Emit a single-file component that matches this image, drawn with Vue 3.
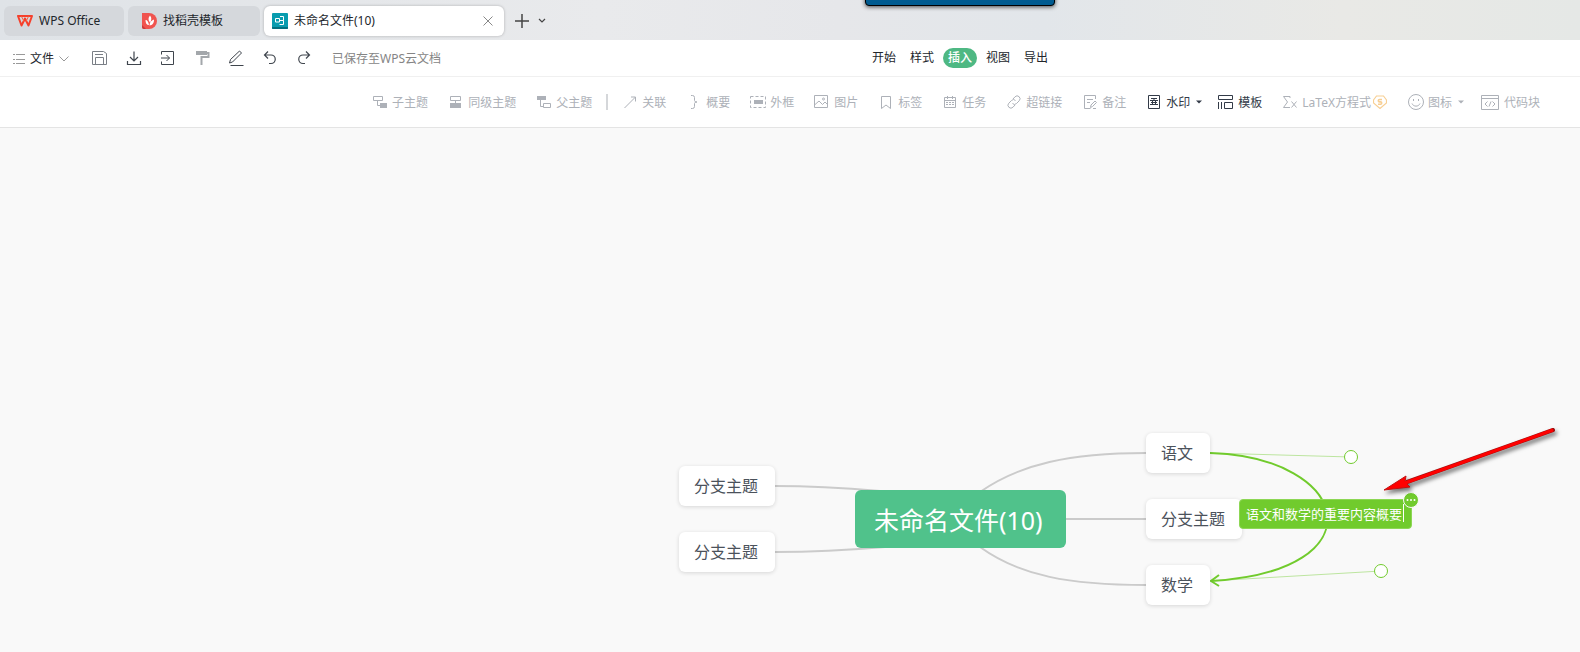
<template>
  <div class="app">
    <header class="tabbar">
      <a class="tab tab-home" href="#">
        <svg width="16" height="12" viewBox="0 0 16 12">
          <path d="M1 1h14l-3.500 9.500-3.500-7-3.500 7z" fill="none" stroke="#f5402c" stroke-width="2" stroke-linejoin="round" />
          <path d="M4.500 1.500l2.500 5M11.500 1.500l-2.500 5" stroke="#fb6340" stroke-width="1" />
        </svg>
        WPS Office
      </a>
      <a class="tab tab-docer" href="#">
        <svg width="15" height="16" viewBox="0 0 15 16">
          <path d="M0 0h7a8 8 0 0 1 0 16H2a2 2 0 0 1-2-2z" fill="#f0544f" />
          <path d="M0 12l4 4H2a2 2 0 0 1-2-2z" fill="#c93a3a" />
          <path d="M8 2.500c2 2 1.500 5 0 7-2-2-2-5 0-7zM3.500 7c2 0 3 2 3.500 5C4.500 12 3.500 10 3.500 7zM12 6.500c0 4-1.500 5.500-4.500 6C7.500 9.500 9 7.500 12 6.500z" fill="#fff" />
        </svg>
        找稻壳模板
      </a>
      <div class="tab tab-active">
        <svg width="16" height="16" viewBox="0 0 16 16">
          <rect width="16" height="16" rx="1" fill="#089caf" />
          <path d="M0 14h16v1a1 1 0 0 1-1 1H1a1 1 0 0 1-1-1z" fill="#04707f" />
          <path d="M3.500 5.500h4v3.500h-4zM7.500 7.500h4M8 3.500h3.500v4M7.500 11.500h4v-4" fill="none" stroke="#fff" />
        </svg>
        <span class="tab-name">未命名文件(10)</span>
        <button class="plain" aria-label="关闭">
          <svg width="10" height="10" viewBox="0 0 10 10"><path d="M.5.5l9 9M9.500.5l-9 9" stroke="#888" /></svg>
        </button>
      </div>
      <button class="plain add" aria-label="新建">
        <svg width="14" height="14" viewBox="0 0 14 14"><path d="M7 0v14M0 7h14" stroke="#444" stroke-width="1.500" /></svg>
      </button>
      <button class="plain more" aria-label="更多">
        <svg width="8" height="6" viewBox="0 0 8 6"><path d="M1 1l3 3 3-3" fill="none" stroke="#444" stroke-width="1.200" /></svg>
      </button>
      <div class="dock"></div>
    </header>

    <nav class="menubar">
      <div class="menu-left">
        <button class="plain file">
          <svg width="13" height="12" viewBox="0 0 13 12"><path d="M1 1.500h2M4 1.500h9M1 6.500h2M4 6.500h9M1 10.500h2M4 10.500h9" stroke="#999" /></svg>
          <span>文件</span>
          <svg width="10" height="6" viewBox="0 0 10 6"><path d="M.5.5L5 5 9.500.5" fill="none" stroke="#999" /></svg>
        </button>
        <button v-for="a in actions" :key="a.label" class="plain action" :aria-label="a.label">
          <svg width="18" height="18" viewBox="0 0 18 18" fill="none" stroke="#3f454d" v-html="a.icon"></svg>
        </button>
        <span class="saved">已保存至WPS云文档</span>
      </div>
      <div class="menu-tabs">
        <button v-for="m in menus" :key="m" :class="['menu-tab', { current: m === activeMenu }]" @click="activeMenu = m">{{ m }}</button>
      </div>
    </nav>

    <div class="toolbar">
      <template v-for="t in tools" :key="t.label">
        <button :class="['tool', { enabled: t.enabled }]">
          <svg :width="t.width || 16" height="16" :viewBox="`0 0 ${t.width || 16} 16`" fill="none" stroke="currentColor" v-html="t.icon"></svg>
          <span>{{ t.label }}</span>
          <svg v-if="t.badge" class="coin" width="14" height="14" viewBox="0 0 14 14" fill="none" stroke="#f7cf94">
            <path d="M3.500 1h7L13.500 5v3L7 13.500.5 8V5z" stroke-width="1.200" />
            <path d="M9 4.500H6.500a1.200 1.200 0 0 0 0 2.400h1a1.200 1.200 0 0 1 0 2.400H5" stroke-width="1.600" />
          </svg>
          <svg v-if="t.caret" class="caret" width="6" height="4" viewBox="0 0 6 4"><path d="M0 .5h6L3 3.500z" fill="currentColor" /></svg>
        </button>
        <i v-if="t.divider" class="divider"></i>
      </template>
    </div>

    <main class="canvas">
      <svg class="links" fill="none">
        <g stroke="#cbcbcb" stroke-width="2">
          <path d="M775 358C810 358 845 360 880 363" />
          <path d="M775 424C815 424 850 422 885 419" />
          <path d="M980 364C1020 336 1070 325 1146 325" />
          <path d="M1060 391H1146" />
          <path d="M980 419C1020 448 1070 457 1146 457" />
        </g>
        <g stroke="#71cb2d">
          <path d="M1210 325L1351 329M1210 453L1381 443" stroke="#bde5a0" stroke-width="1" />
          <path d="M1210 325C1351 329 1381 443 1211 453" stroke-width="2" />
          <path d="M1219 447L1211 453L1219 458" stroke-width="2" />
          <circle cx="1351" cy="329" r="6.500" fill="#fff" />
          <circle cx="1381" cy="443" r="6.500" fill="#fff" />
        </g>
      </svg>
      <div v-for="(n, i) in nodes" :key="i" :class="['node', n.kind]" :style="{ left: n.x + 'px', top: n.y + 'px' }">{{ n.text }}</div>
      <div class="summary">
        <input v-model="summary" type="text" aria-label="概要" />
        <button class="summary-more" aria-label="更多">
          <svg width="14" height="14" viewBox="0 0 14 14" fill="#fff"><circle cx="3.500" cy="7" r="1" /><circle cx="7" cy="7" r="1" /><circle cx="10.500" cy="7" r="1" /></svg>
        </button>
      </div>
      <svg class="pointer" width="180" height="76" viewBox="0 0 180 76">
        <path d="M173 9L27 61" stroke="#a01010" stroke-width="4" stroke-linecap="round" />
        <path d="M4 69L26 55L25 61L30 66Z" fill="#f00" stroke="#c01010" />
        <path d="M173 9L22 63" stroke="#f00" stroke-width="3" />
      </svg>
    </main>
  </div>
</template>

<script setup>
import { ref } from 'vue'

const activeMenu = ref('插入')
const menus = ['开始', '样式', '插入', '视图', '导出']
const summary = ref('语文和数学的重要内容概要')

const actions = [
  { label: '保存', icon: '<path d="M2.500 2.500h11l3 2v11h-14z" stroke="#7a7f86"/><path d="M5.500 15V8.500h8V15M5 5.500h8" stroke="#7a7f86"/>' },
  { label: '下载', icon: '<path d="M10 2.500v9M6 8l4 4 4-4M3.500 12v3.500h13V12" stroke-width="1.200"/>' },
  { label: '导入', icon: '<path d="M3.500 5.500v-3h12v13h-12v-3M3 9h8.500M8.500 6l3 3-3 3"/>' },
  { label: '格式刷', icon: '<path d="M4 2h11v4H4z" fill="#a3a7ab" stroke="none"/><path d="M15 4h1.500v4h-7v8" stroke="#a3a7ab" stroke-width="2"/>' },
  { label: '画笔', icon: '<path d="M3.500 14l1-3.500 9-8.500 2 2-9 9zM4.500 16.500h13"/>' },
  { label: '撤销', icon: '<path d="M8 2.500L4.500 6 8 9.500M4.500 6H11a4.200 4.200 0 0 1 0 8.500H9" stroke-width="1.200"/>' },
  { label: '重做', icon: '<path d="M12 2.500L15.500 6 12 9.500M15.500 6H9a4.200 4.200 0 0 0 0 8.500h2" stroke-width="1.200"/>' }
]

const tools = [
  { label: '子主题', icon: '<path d="M1.500 2.500h9v4h-9zM5.500 6.500v5H9"/><path d="M8 9h7v5H8z" fill="currentColor" stroke="none"/>' },
  { label: '同级主题', icon: '<path d="M2.500 2.500h10v4h-10zM7.500 6.500V10"/><path d="M2 9h11v5H2z" fill="currentColor" stroke="none"/>' },
  { label: '父主题', divider: true, icon: '<path d="M1 2h9v4H1z" fill="currentColor" stroke="none"/><path d="M4.500 6v6.500h3M7.500 9.500h7v4h-7z"/>' },
  { label: '关联', icon: '<path d="M2.500 14L13.500 3M9 3h4.500v4.500"/>' },
  { label: '概要', icon: '<path d="M5 1.500h1.500Q8.500 1.500 8.500 3.500v3Q8.500 8 11 8 8.500 8 8.500 9.500v3q0 2-2 2H5"/>' },
  { label: '外框', icon: '<path d="M.5 2.500h15v11H.5z" stroke-dasharray="3 2"/><path d="M4 6h9v4H4z" fill="currentColor" stroke="none"/>' },
  { label: '图片', icon: '<path d="M.5 1.500h13v12H.5zM.5 11L5 7l3.500 3.500L11 8l2.500 2.500"/><circle cx="9.500" cy="5" r="1"/>' },
  { label: '标签', icon: '<path d="M3.500 2.500h9v12L8 11l-4.500 3.500z"/>' },
  { label: '任务', icon: '<path d="M2.500 3.500h11v10h-11zM3 6.500h10M5.500 2v3M10.500 2v3"/><path d="M4 8.500h8M4 10.500h8" stroke-dasharray="2 1"/>' },
  { label: '超链接', icon: '<path d="M7 5l2-2.200a2.800 2.800 0 0 1 4.200 4L10.500 9.500a2.800 2.800 0 0 1-4 0M9 11l-2 2.200a2.800 2.800 0 0 1-4.200-4L5.500 6.500a2.800 2.800 0 0 1 4 0"/>' },
  { label: '备注', icon: '<path d="M13.500 5V1.500h-11v13h6M5 5.500h6M5 8.500h3M8.500 13.500l.5-2.500 4-4 1.500 1.500-4 4zM11 14.500h3"/>' },
  { label: '水印', enabled: true, caret: true, icon: '<path d="M2.500 1.500h11v13h-11z"/><path d="M5 4.500h6M4 6.500h8M5 8.500h6M4 10.500h8M6.500 6v4M9.500 6v4M8 4v3"/>' },
  { label: '模板', enabled: true, icon: '<path d="M.5 1.500h14v4H.5zM6.500 8.500h8v6h-8zM.5 8v7M3.500 8v7"/>' },
  { label: 'LaTeX方程式', badge: true, icon: '<path d="M8 4V2.500H1.500L5.500 8l-4 5.500H8M9.500 7.500l5 6M14.500 7.500l-5 6"/>' },
  { label: '图标', caret: true, icon: '<circle cx="8" cy="8" r="7.500"/><path d="M5.500 5v2M10.500 5v2M4 9.500c1.500 3.500 6.500 3.500 8 0"/>' },
  { label: '代码块', width: 20, icon: '<path d="M1.500 1.500h17v14h-17zM2 4.500h16M7.500 7.500L5 10l2.500 2.500M12.500 7.500L15 10l-2.500 2.500M11 7.500l-2 5"/>' }
]

// node positions on the canvas
const nodes = [
  { text: '分支主题', x: 679, y: 338 },
  { text: '分支主题', x: 679, y: 404 },
  { text: '未命名文件(10)', x: 855, y: 362, kind: 'root' },
  { text: '语文', x: 1146, y: 305 },
  { text: '分支主题', x: 1146, y: 371 },
  { text: '数学', x: 1146, y: 437 }
]
</script>

<style>
body {
  margin: 0;
}
</style>

<style scoped>
.app {
  display: flex;
  flex-direction: column;
  min-height: 100vh;
  overflow: hidden;
  font-family: "Noto Sans", "Noto Sans CJK SC", sans-serif;
  font-size: 12px;
  line-height: 16px;
  color: #22262b;
}

button {
  font: inherit;
  color: inherit;
  border: 0;
  background: none;
  padding: 0;
  cursor: pointer;
  white-space: nowrap;
}

svg {
  display: block;
  flex: none;
}

.plain {
  display: flex;
  align-items: center;
  justify-content: center;
}

.tabbar {
  position: relative;
  display: flex;
  align-items: center;
  gap: 4px;
  height: 40px;
  box-sizing: border-box;
  padding: 2px 4px 0;
  background: linear-gradient(90deg, #dfe3e7, #e9eaec 38%, #e6e7ea 53%, #e2e6ea 66%, #e9e9e6 85%, #e5e8e6);
}

.tab {
  display: flex;
  align-items: center;
  gap: 6px;
  height: 30px;
  box-sizing: border-box;
  border-radius: 6px;
  background: #d5d8dc;
  color: #22262b;
  text-decoration: none;
  white-space: nowrap;
}

.tab-home {
  width: 120px;
  padding-left: 13px;
}

.tab-docer {
  width: 132px;
  padding-left: 14px;
}

.tab-active {
  width: 240px;
  padding: 0 11px 0 8px;
  background: #fff;
  box-shadow: 0 0 3px rgba(0, 0, 0, 0.25);
}

.tab-name {
  flex: 1;
}

.add {
  margin-left: 7px;
}

.more {
  margin-left: 5px;
}

.dock {
  position: absolute;
  top: -8px;
  left: 865px;
  width: 190px;
  height: 14px;
  box-sizing: border-box;
  border: 1px solid #000;
  border-radius: 4px;
  background: #005b90;
  box-shadow: 0 1px 4px rgba(0, 0, 0, 0.7);
}

.menubar {
  display: grid;
  grid-template-columns: 867fr 713fr;
  align-items: center;
  height: 37px;
  box-sizing: border-box;
  border-bottom: 1px solid #f0f0f0;
  background: #fff;
}

.menu-left {
  display: flex;
  align-items: center;
  gap: 16px;
  padding-left: 12px;
}

.file {
  gap: 5px;
  margin-right: 5px;
  padding-top: 2px;
}

.saved {
  margin-left: 4px;
  padding-top: 2px;
  color: #858585;
}

.menu-tabs {
  display: flex;
  gap: 4px;
}

.menu-tab {
  height: 20px;
  padding: 0 5px;
  border-radius: 10px;
}

.menu-tab.current {
  background: #4eb883;
  color: #fff;
  font-weight: 500;
}

.toolbar {
  display: flex;
  align-items: center;
  justify-content: flex-end;
  gap: 20px;
  height: 51px;
  box-sizing: border-box;
  padding-right: 40px;
  border-bottom: 1px solid #e4e4e4;
  background: #fff;
}

.tool {
  display: flex;
  align-items: center;
  gap: 4px;
  color: #adb1b8;
}

.tool span {
  padding-top: 2px;
}

.tool.enabled {
  color: #333b48;
}

.coin {
  margin-left: -2px;
  margin-right: 1px;
}

.caret {
  margin-left: 2px;
  margin-right: -4px;
}

.divider {
  width: 2px;
  height: 16px;
  margin: 0 -6px;
  background: #d5d7da;
}

.canvas {
  position: relative;
  flex: 1;
  min-height: 500px;
  background: #f9f9f9;
}

.links {
  position: absolute;
  inset: 0;
  width: 100%;
  height: 100%;
  overflow: visible;
}

.node {
  position: absolute;
  padding: 8px 17px 8px 15px;
  border-radius: 6px;
  background: #fff;
  box-shadow: 0 1px 4px rgba(0, 0, 0, 0.14);
  color: #4b525b;
  font-size: 16px;
  line-height: 24px;
  white-space: nowrap;
}

.node.root {
  padding: 12px 23px 10px 19px;
  background: #50c28b;
  box-shadow: none;
  color: #fff;
  font-size: 25px;
  line-height: 36px;
}

.summary {
  position: absolute;
  left: 1239px;
  top: 371px;
  padding: 4px 7px 6px 6px;
  border: 1px solid #8dd755;
  border-radius: 4px;
  background: #71cb2d;
}

.summary input {
  display: block;
  width: 157px;
  height: 18px;
  padding: 0;
  border: 0;
  border-right: 1px solid #fff;
  outline: 0;
  background: none;
  color: #fff;
  font: inherit;
  font-size: 13px;
}

.summary-more {
  position: absolute;
  top: -8px;
  right: -8px;
  border: 1px solid #f9f9f9;
  border-radius: 50%;
  background: #71cb2d;
}

.pointer {
  position: absolute;
  left: 1380px;
  top: 293px;
  filter: drop-shadow(2px 3px 2px rgba(0, 0, 0, 0.55));
}
</style>
